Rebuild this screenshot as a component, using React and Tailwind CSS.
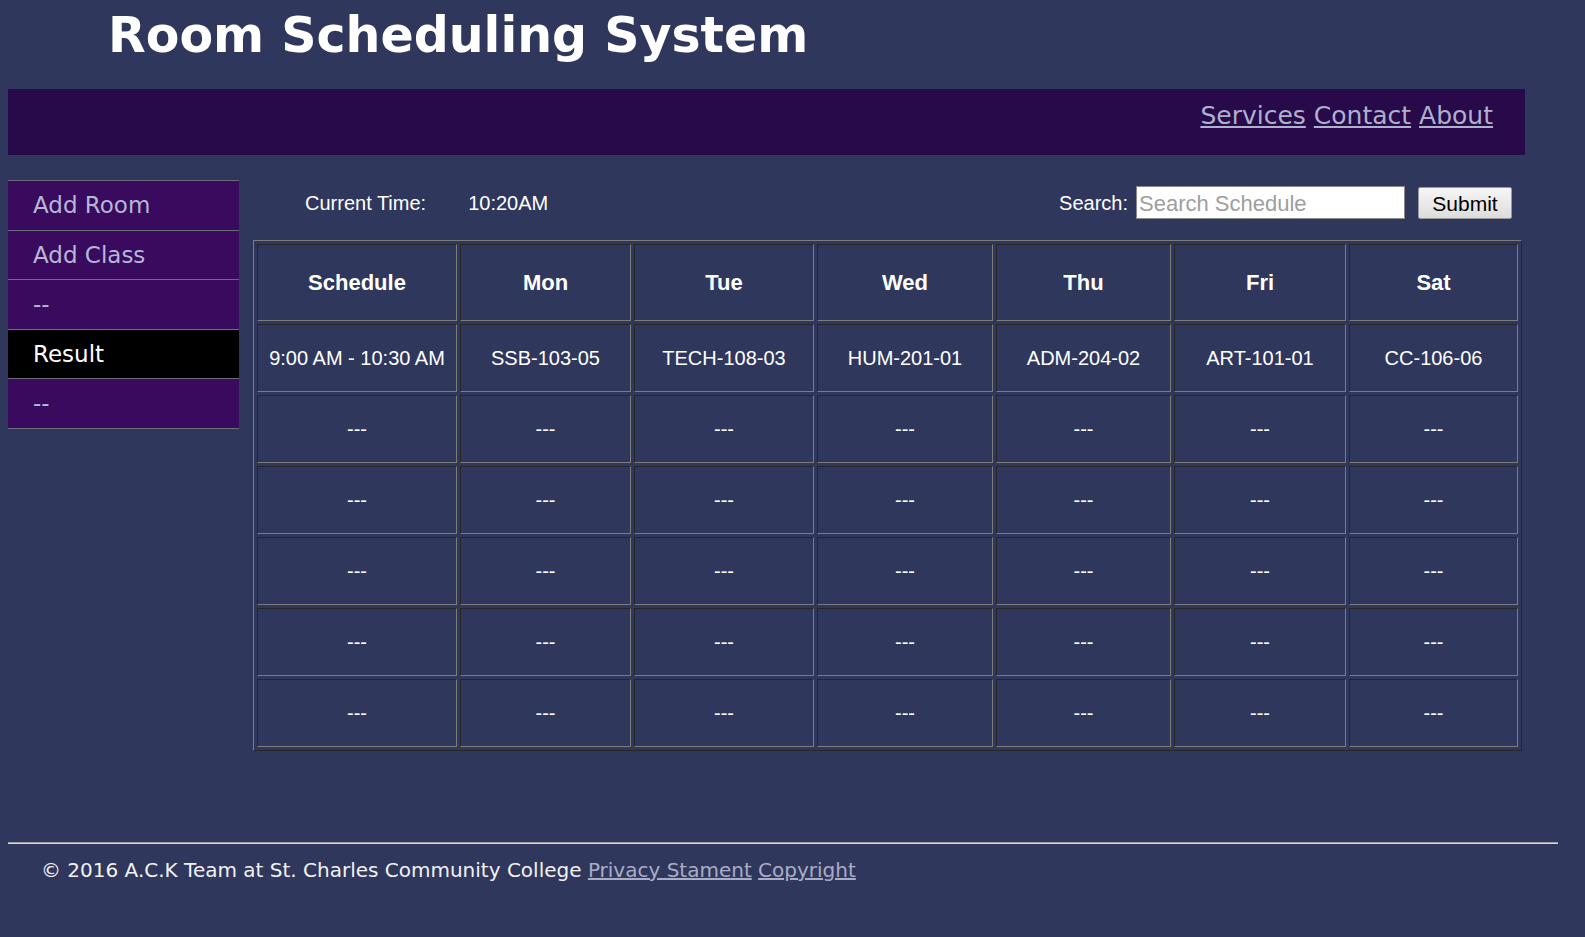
import React from 'react';

const days = ['Schedule', 'Mon', 'Tue', 'Wed', 'Thu', 'Fri', 'Sat'];
const colW = ['w-[200px]', 'w-[171px]', 'w-[180px]', 'w-[176px]', 'w-[175px]', 'w-[172px]', 'w-[169px]'];
const firstRow = ['9:00 AM - 10:30 AM', 'SSB-103-05', 'TECH-108-03', 'HUM-201-01', 'ADM-204-02', 'ART-101-01', 'CC-106-06'];

const verdana = { fontFamily: '"DejaVu Sans", Verdana, sans-serif' };
const arial = { fontFamily: '"Liberation Sans", Arial, sans-serif' };

const cell = 'border border-t-[#262626] border-l-[#262626] border-b-[#7c7c7c] border-r-[#7c7c7c] text-center text-white p-0';

function Sidebar() {
    const items = [
        { label: 'Add Room' },
        { label: 'Add Class' },
        { label: '--' },
        { label: 'Result', active: true },
        { label: '--' },
    ];
    return (
        <ul className="w-[231px] mt-[25px] border-t border-[#6c6c7c]" style={verdana}>
            {items.map((it, i) => (
                <li
                    key={i}
                    className={
                        'h-[49.5px] flex items-center pl-[25px] text-[23px] border-b border-[#6c6c7c] ' +
                        (it.active ? 'bg-black text-white' : 'bg-[#390a5d] text-[#b4b8d4]')
                    }
                >
                    {it.label}
                </li>
            ))}
        </ul>
    );
}

function ScheduleTable() {
    return (
        <table
            className="w-[1269px] table-fixed border-separate border-spacing-[3px] border border-t-[#7c7c7c] border-l-[#7c7c7c] border-b-[#262626] border-r-[#262626]"
            style={arial}
        >
            <thead>
                <tr>
                    {days.map((d, i) => (
                        <th key={d} className={cell + ' h-[77px] text-[22px] font-bold ' + colW[i]}>
                            {d}
                        </th>
                    ))}
                </tr>
            </thead>
            <tbody>
                <tr>
                    {firstRow.map((c) => (
                        <td key={c} className={cell + ' h-[68px] text-[20px]'}>{c}</td>
                    ))}
                </tr>
                {[0, 1, 2, 3, 4].map((r) => (
                    <tr key={r}>
                        {days.map((d) => (
                            <td key={d} className={cell + ' h-[68px] text-[20px]'}>---</td>
                        ))}
                    </tr>
                ))}
            </tbody>
        </table>
    );
}

export default function App() {
    return (
        <div className="min-h-[937px] bg-[#30375d] text-white overflow-hidden">
            {/* header */}
            <div className="h-[89px] pl-[108px] pt-[1px]">
                <h1 className="text-[49px] font-bold leading-[70px] text-white" style={verdana}>
                    Room Scheduling System
                </h1>
            </div>

            <nav className="ml-2 w-[1517px] h-[66px] bg-[#28094a] flex items-center justify-end pr-[32px] pb-[13px] gap-[8px] text-[25px]" style={verdana}>
                <a href="#" className="text-[#aeb1cc] underline">Services</a>
                <a href="#" className="text-[#aeb1cc] underline">Contact</a>
                <a href="#" className="text-[#aeb1cc] underline">About</a>
            </nav>

            <div className="flex ml-2">
                <Sidebar />
                <div className="ml-[14px] w-[1269px]">
                    <div className="h-[33px] mt-[31px] flex items-center text-[20px] text-white" style={arial}>
                        <span className="ml-[52px]">Current Time:</span>
                        <span className="ml-[42px]">10:20AM</span>
                        <span className="ml-auto mr-[8px]">Search:</span>
                        <input
                            type="text"
                            placeholder="Search Schedule"
                            className="w-[269px] h-[33px] bg-white border border-[#8a8a8a] px-[2px] pt-[2px] text-[22px] text-black placeholder:text-[#9e9e9e] outline-none"
                            style={arial}
                        />
                        <button
                            className="ml-[13px] mr-[10px] w-[94px] h-[32px] bg-gradient-to-b from-[#f6f6f6] to-[#dddddd] border border-[#9a9a9a] rounded-[2px] text-black text-[21px]"
                            style={arial}
                        >
                            Submit
                        </button>
                    </div>
                    <div className="mt-[21px]">
                        <ScheduleTable />
                    </div>
                </div>
            </div>

            <footer className="mt-[91px]">
                <div className="ml-2 w-[1550px] h-[2px] bg-[#d8d8d8] border-t border-[#a0a0a0]" />
                <p className="mt-[11px] pl-[41px] text-[20px] text-[#f2f2f2]" style={verdana}>
                    © 2016 A.C.K Team at St. Charles Community College{' '}
                    <a href="#" className="text-[#a9adc6] underline">Privacy Stament</a>{' '}
                    <a href="#" className="text-[#a9adc6] underline">Copyright</a>
                </p>
            </footer>
        </div>
    );
}
